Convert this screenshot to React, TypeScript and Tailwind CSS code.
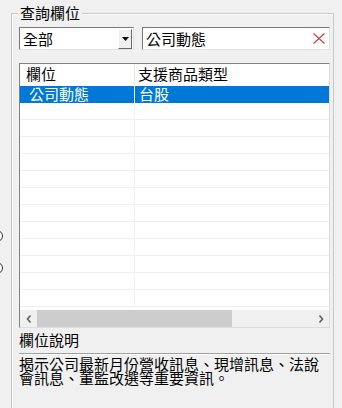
import React from "react";

const font = { fontFamily: '"Noto Sans CJK TC", "Noto Sans", sans-serif' };

const rows = [
  { name: "公司動態", type: "台股", selected: true },
  ...Array.from({ length: 12 }, () => ({ name: "", type: "", selected: false })),
];

function Chevron({ dir }: { dir: "left" | "right" }) {
  return (
    <svg width="6" height="8" viewBox="0 0 6 8">
      <path
        d={dir === "left" ? "M4.5 0.5 L1.5 4 L4.5 7.5" : "M1.5 0.5 L4.5 4 L1.5 7.5"}
        fill="none"
        stroke="#606060"
        strokeWidth="1.6"
      />
    </svg>
  );
}

export default function App() {
  return (
    <div
      className="w-[342px] h-[408px] bg-[#f0f0f0] flex overflow-hidden text-[15px] text-black"
      style={font}
    >
      {/* cut-off radio buttons of the left panel */}
      <div className="w-[11px] shrink-0 flex flex-col pt-[230px] overflow-hidden">
        <div className="w-[12px] h-[12px] rounded-full border border-[#333] bg-white -ml-[9px]" />
        <div className="w-[12px] h-[12px] rounded-full border border-[#333] bg-white -ml-[9px] mt-[20px]" />
      </div>

      {/* group box */}
      <div className="relative mt-[13px] w-[323px] h-[420px] shrink-0 border-l border-t border-r border-[#c8c8c8] shadow-[inset_1px_1px_0_#ffffff] pl-[7px] pr-[3px] pt-[13px]">
        <div className="absolute -top-[10px] left-[6px] px-[2px] bg-[#f0f0f0] leading-[18px]">查詢欄位</div>

        {/* filter row */}
        <div className="flex h-[23px] gap-[8px]">
          <div className="w-[115px] flex items-center bg-white border border-t-[#7a7a7a] border-l-[#7a7a7a] border-r-[#e3e3e3] border-b-[#e3e3e3] pl-[3px] pr-[1px]">
            <span className="flex-1 leading-[18px]">全部</span>
            <div className="w-[14px] h-[20px] bg-[#f0f0f0] border border-t-white border-l-white border-r-[#696969] border-b-[#696969] flex items-center justify-center">
              <svg width="7" height="4" viewBox="0 0 7 4">
                <path d="M0 0 L7 0 L3.5 4 Z" fill="#000" />
              </svg>
            </div>
          </div>
          <div className="flex-1 flex items-center bg-white border border-t-[#7a7a7a] border-l-[#7a7a7a] border-r-[#e3e3e3] border-b-[#e3e3e3] pl-[3px] pr-[4px]">
            <span className="flex-1 leading-[18px]">公司動態</span>
            <svg width="12" height="11" viewBox="0 0 12 11">
              <path d="M0.5 0.5 L11.5 10.5 M11.5 0.5 L0.5 10.5" stroke="#c84a4a" strokeWidth="1.3" fill="none" />
            </svg>
          </div>
        </div>

        {/* list view */}
        <div className="mt-[13px] w-[311px] h-[265px] bg-white border border-t-[#828282] border-l-[#828282] border-r-[#dcdcdc] border-b-[#dcdcdc] flex flex-col">
          <div className="flex h-[21px] shrink-0 leading-[20px]">
            <div className="w-[115px] pl-[6px] border-r border-[#e5e5e5]">欄位</div>
            <div className="flex-1 pl-[3px]">支援商品類型</div>
          </div>
          <div className="flex-1 overflow-hidden">
            {rows.map((r, i) => (
              <div
                key={i}
                className={
                  r.selected
                    ? "flex h-[17px] leading-[16px] mt-[1px] bg-[#0078d7] text-white"
                    : "flex h-[17px] leading-[16px] border-b border-[#efefef]"
                }
              >
                <div className="w-[115px] pl-[9px] border-r border-[#f0f0f0]">{r.name}</div>
                <div className="flex-1 pl-[4px]">{r.type}</div>
              </div>
            ))}
          </div>
          <div className="flex h-[17px] shrink-0 bg-[#f0f0f0]">
            <div className="w-[17px] flex items-center justify-center">
              <Chevron dir="left" />
            </div>
            <div className="flex-1 flex items-center">
              <div className="w-[195px] h-[17px] bg-[#cdcdcd]" />
            </div>
            <div className="w-[17px] flex items-center justify-center">
              <Chevron dir="right" />
            </div>
          </div>
        </div>

        {/* description */}
        <div className="mt-[3px] leading-[18px]">欄位說明</div>
        <div className="mt-[4px] w-[311px] h-[2px] border-t border-[#a0a0a0] border-b border-b-white" />
        <p className="mt-[2px] w-[311px] leading-[14px]">
          揭示公司最新月份營收訊息、現增訊息、法說會訊息、董監改選等重要資訊。
        </p>
      </div>
    </div>
  );
}
